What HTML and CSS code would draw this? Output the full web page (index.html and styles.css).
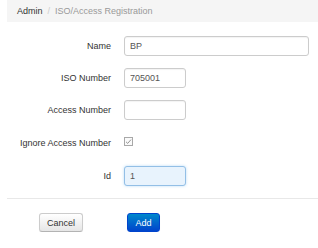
FILE: index.html
```html
<!DOCTYPE html>
<html lang="en">
<head>
    <meta charset="UTF-8">
    <meta name="viewport" content="width=device-width, initial-scale=1.0">
    <title>ISO/Access Registration</title>
    <link rel="stylesheet" href="styles.css">
</head>
<body>

    <ul class="breadcrumb">
        <li class="crumb-link">Admin</li>
        <li class="divider">/</li>
        <li class="crumb-active">ISO/Access Registration</li>
    </ul>

    <form class="reg-form">
        <div class="form-row">
            <label class="form-label">Name</label>
            <input class="text-input wide" type="text" value="BP">
        </div>
        <div class="form-row">
            <label class="form-label">ISO Number</label>
            <input class="text-input short" type="text" value="705001">
        </div>
        <div class="form-row">
            <label class="form-label">Access Number</label>
            <input class="text-input short" type="text" value="">
        </div>
        <div class="form-row check-row">
            <label class="form-label">Ignore Access Number</label>
            <span class="check-box">
                <svg width="7" height="7" viewBox="0 0 7 7"><path d="M1 3.8 L2.7 5.4 L6 1.6" fill="none" stroke="#8a8a8a" stroke-width="0.9"/></svg>
            </span>
        </div>
        <div class="form-row">
            <label class="form-label">Id</label>
            <input class="text-input short focused" type="text" value="1">
        </div>

        <div class="form-actions">
            <button type="button" class="btn">Cancel</button>
            <button type="button" class="btn btn-primary">Add</button>
        </div>
    </form>

</body>
</html>
```

FILE: styles.css
```css
body {
    font-family: "Liberation Sans", Arial, sans-serif;
    font-size: 9px;
    color: #333;
    margin: 0;
    padding: 0 0 0 7px;
    background-color: #fff;
}

.breadcrumb {
    list-style: none;
    margin: 0;
    padding: 0 0 0 10px;
    height: 22px;
    display: flex;
    align-items: center;
    background-color: #f5f5f5;
}

.crumb-link {
    color: #333;
}

.divider {
    color: #ccc;
    padding: 0 5px;
}

.crumb-active {
    color: #999;
}

.reg-form {
    margin-top: 14px;
}

.form-row {
    display: grid;
    grid-template-columns: 104px 1fr;
    column-gap: 13px;
    align-items: center;
    height: 20px;
    margin-bottom: 12px;
}

.check-row {
    height: 22px;
}

.form-label {
    text-align: right;
    color: #333;
}

.text-input {
    font-family: "Liberation Sans", Arial, sans-serif;
    font-size: 9px;
    color: #555;
    height: 20px;
    box-sizing: border-box;
    padding: 0 5px;
    border: 1px solid #ccc;
    border-radius: 3px;
    box-shadow: inset 0 1px 1px rgba(0, 0, 0, 0.05);
    outline: none;
}

.wide {
    width: 185px;
}

.short {
    width: 62px;
}

.focused {
    background-color: #e8f3fd;
    border-color: #93bfe6;
    box-shadow: 0 0 3px rgba(82, 168, 236, 0.4);
}

.check-box {
    width: 9px;
    height: 9px;
    box-sizing: border-box;
    border: 1px solid #a8a8a8;
    background-color: #fafafa;
    display: flex;
    align-items: center;
    justify-content: center;
    margin-top: -3px;
}

.form-actions {
    border-top: 1px solid #e8e8e8;
    margin-top: 0;
    padding: 14px 0 0 32px;
    display: flex;
    gap: 44px;
}

.btn {
    font-family: "Liberation Sans", Arial, sans-serif;
    font-size: 9px;
    height: 19px;
    width: 44px;
    padding: 0;
    color: #333;
    border: 1px solid #ccc;
    border-bottom-color: #b3b3b3;
    border-radius: 3px;
    background: linear-gradient(to bottom, #fff, #e6e6e6);
    box-shadow: 0 1px 1px rgba(0, 0, 0, 0.05);
}

.btn-primary {
    width: 33px;
    color: #fff;
    border-color: #0044cc;
    background: linear-gradient(to bottom, #0088cc, #0044cc);
}
```
